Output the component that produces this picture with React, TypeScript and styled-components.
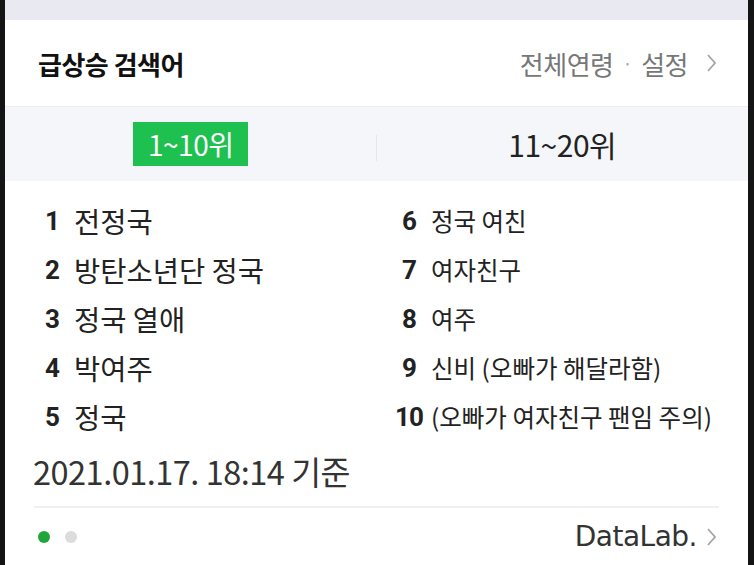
import styled, { createGlobalStyle } from 'styled-components';

const GlobalStyle = createGlobalStyle`
    html, body { margin: 0; padding: 0; background: #111; }
    body {
        font-family: "Noto Sans CJK KR", "Noto Sans", sans-serif;
        color: #222;
    }
`;

const Frame = styled.div`
    width: 754px;
    height: 565px;
    box-sizing: border-box;
    border-left: 5px solid #141414;
    border-right: 6px solid #141414;
    background: #fff;
    display: flex;
    flex-direction: column;
    overflow: hidden;
`;

const TopBand = styled.div`
    height: 20px;
    background: #e9e9f1;
`;

const Header = styled.div`
    height: 86px;
    display: flex;
    align-items: center;
    justify-content: space-between;
    padding: 0 31px 0 33px;
`;

const Title = styled.h2`
    margin: 0;
    font-size: 26px;
    font-weight: 700;
    color: #111;
    letter-spacing: -0.5px;
`;

const Settings = styled.div`
    display: flex;
    align-items: center;
    font-size: 26px;
    color: #777;
    letter-spacing: -0.5px;
    svg { margin-left: 18px; }
`;

const Sep = styled.span`
    margin: 0 9px;
    color: #aaa;
    font-size: 18px;
`;

const Tabs = styled.div`
    height: 75px;
    background: #f5f6fa;
    display: grid;
    grid-template-columns: 1fr 1fr;
    align-items: center;
    position: relative;
    border-top: 1px solid #ededf0;
    box-sizing: border-box;
`;

const TabDivider = styled.span`
    position: absolute;
    left: 371px;
    top: 28px;
    width: 1px;
    height: 26px;
    background: #e6e7ec;
`;

const Tab = styled.div<{ $active?: boolean }>`
    justify-self: center;
    font-size: ${(p) => (p.$active ? '28px' : '30px')};
    line-height: 44px;
    padding: 0 15px;
    letter-spacing: -0.5px;
    color: ${(p) => (p.$active ? '#fff' : '#222')};
    background: ${(p) => (p.$active ? '#1ec150' : 'transparent')};
`;

const List = styled.ol`
    list-style: none;
    margin: 0;
    padding: 15px 0 0 31px;
    display: grid;
    grid-template-columns: 357px 1fr;
    grid-auto-flow: column;
    grid-template-rows: repeat(5, 49px);
`;

const Item = styled.li<{ $big?: boolean }>`
    display: flex;
    align-items: center;
    font-size: ${(p) => (p.$big ? '28.5px' : '24.5px')};
    color: #222;
    white-space: nowrap;
`;

const Rank = styled.span`
    width: 32px;
    margin-right: 6px;
    text-align: center;
    font-family: Roboto, "Liberation Sans", sans-serif;
    font-weight: 700;
    font-size: 26px;
    letter-spacing: -1px;
    color: #222;
`;

const Stamp = styled.div`
    padding: 0 0 0 28px;
    height: 58px;
    display: flex;
    align-items: center;
    font-size: 32.5px;
    color: #333;
    letter-spacing: -0.5px;
`;

const Rule = styled.hr`
    margin: 7px 29px 0 29px;
    border: 0;
    height: 2px;
    background: #f0f0f2;
`;

const Footer = styled.div`
    flex: 1;
    display: flex;
    align-items: center;
    justify-content: space-between;
    padding: 0 31px 0 33px;
`;

const Dots = styled.div`
    display: flex;
    gap: 15px;
`;

const Dot = styled.span<{ $on?: boolean }>`
    width: 12px;
    height: 12px;
    border-radius: 50%;
    background: ${(p) => (p.$on ? '#1fa53c' : '#dcdcdc')};
`;

const DataLab = styled.div`
    display: flex;
    align-items: center;
    gap: 9px;
    font-family: "DejaVu Sans", sans-serif;
    font-size: 28px;
    color: #333;
    letter-spacing: -0.5px;
`;

const Chevron = () => (
    <svg width="11" height="20" viewBox="0 0 11 20">
        <path d="M2 2 L9 10 L2 18" fill="none" stroke="#a5a5a5" strokeWidth="1.8" />
    </svg>
);

const items: [number, string][] = [
    [1, '전정국'],
    [2, '방탄소년단 정국'],
    [3, '정국 열애'],
    [4, '박여주'],
    [5, '정국'],
    [6, '정국 여친'],
    [7, '여자친구'],
    [8, '여주'],
    [9, '신비 (오빠가 해달라함)'],
    [10, '(오빠가 여자친구 팬임 주의)'],
];

export default function App() {
    return (
        <>
            <GlobalStyle />
            <Frame>
                <TopBand />
                <Header>
                    <Title>급상승 검색어</Title>
                    <Settings>
                        <span>전체연령</span>
                        <Sep>·</Sep>
                        <span>설정</span>
                        <Chevron />
                    </Settings>
                </Header>
                <Tabs>
                    <Tab $active>1~10위</Tab>
                    <TabDivider />
                    <Tab>11~20위</Tab>
                </Tabs>
                <List>
                    {items.map(([rank, word]) => (
                        <Item key={rank} $big={rank <= 5}>
                            <Rank>{rank}</Rank>
                            {word}
                        </Item>
                    ))}
                </List>
                <Stamp>2021.01.17. 18:14 기준</Stamp>
                <Rule />
                <Footer>
                    <Dots>
                        <Dot $on />
                        <Dot />
                    </Dots>
                    <DataLab>
                        <span>DataLab.</span>
                        <Chevron />
                    </DataLab>
                </Footer>
            </Frame>
        </>
    );
}
